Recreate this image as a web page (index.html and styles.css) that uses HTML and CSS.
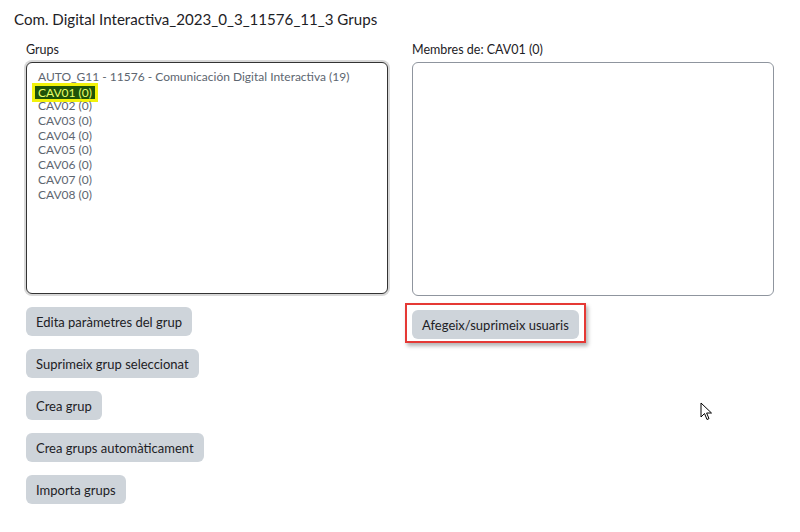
FILE: index.html
```html
<!DOCTYPE html>
<html lang="ca">
<head>
<meta charset="utf-8">
<link rel="stylesheet" href="styles.css">
</head>
<body>
<div class="page">
  <h2 class="title">Com. Digital Interactiva_2023_0_3_11576_11_3 Grups</h2>
  <div class="cols">
    <div class="col">
      <label class="lbl">Grups</label>
      <div class="listbox focused">
        <div class="opt">AUTO_G11 - 11576 - Comunicación Digital Interactiva (19)</div>
        <div class="opt"><span class="sel">CAV01 (0)</span></div>
        <div class="opt">CAV02 (0)</div>
        <div class="opt">CAV03 (0)</div>
        <div class="opt">CAV04 (0)</div>
        <div class="opt">CAV05 (0)</div>
        <div class="opt">CAV06 (0)</div>
        <div class="opt">CAV07 (0)</div>
        <div class="opt">CAV08 (0)</div>
      </div>
      <div class="btns">
        <button class="btn">Edita paràmetres del grup</button>
        <button class="btn">Suprimeix grup seleccionat</button>
        <button class="btn">Crea grup</button>
        <button class="btn">Crea grups automàticament</button>
        <button class="btn">Importa grups</button>
      </div>
    </div>
    <div class="col">
      <label class="lbl">Membres de: CAV01 (0)</label>
      <div class="listbox right"></div>
      <div class="btns right-btns">
        <div class="marked"><button class="btn">Afegeix/suprimeix usuaris</button></div>
      </div>
    </div>
  </div>
  <svg class="cursor" width="14" height="20" viewBox="0 0 14 20"><path d="M1 1 L1 15 L4.5 11.5 L7 17.5 L9 16.6 L6.6 11 L11.5 11 Z" fill="#fff" stroke="#000" stroke-width="1"/></svg>
</div>
</body>
</html>
```
FILE: styles.css
```css
html, body { margin: 0; padding: 0; background: #fff; }
body { font-family: "Lato", "Liberation Sans", sans-serif; color: #1d2125; }
.page { position: relative; width: 800px; height: 532px; padding: 9px 0 0 14px; box-sizing: border-box; }
.title { margin: 0; font-size: 15.1px; font-weight: 400; color: #1d2125; line-height: 20px; }
.cols { display: flex; gap: 24px; margin: 11px 0 0 12px; }
.col { width: 362px; display: flex; flex-direction: column; }
.lbl { font-size: 12.5px; color: #1d2125; line-height: 16px; padding-top: 2px; margin-bottom: 4px; }
.listbox { height: 232px; box-sizing: border-box; border: 1px solid #8f959e; border-radius: 6px; padding: 7px 11px 5px; background: #fff; }
.listbox.focused { border: 1px solid #333; box-shadow: 0 0 0 2px #d8d8d8; }
.listbox.right { height: 234px; }
.opt { font-size: 12px; line-height: 14.7px; height: 14.7px; color: #5d6670; white-space: nowrap; }
.sel { display: inline-block; vertical-align: top; margin-top: 1px; background: #1f5308; color: #e8ff6a; outline: 3px solid #f2f20a; margin-left: -3px; padding: 0 3px; height: 13px; line-height: 13px; }
.btns { display: flex; flex-direction: column; align-items: flex-start; gap: 13px; margin-top: 13px; }
.right-btns { margin-top: 14px; }
.btn { font-family: inherit; font-size: 13px; color: #1d2125; background: #ced4da; border: 0; border-radius: 6px; height: 29px; padding: 0 10px; cursor: default; }
.marked { border: 2px solid #e53935; padding: 5px 5px 2px 5px; margin: -7px 0 0 -7px; box-shadow: 2px 3px 4px rgba(0,0,0,0.3); }
.cursor { position: absolute; left: 700px; top: 402px; }
```
